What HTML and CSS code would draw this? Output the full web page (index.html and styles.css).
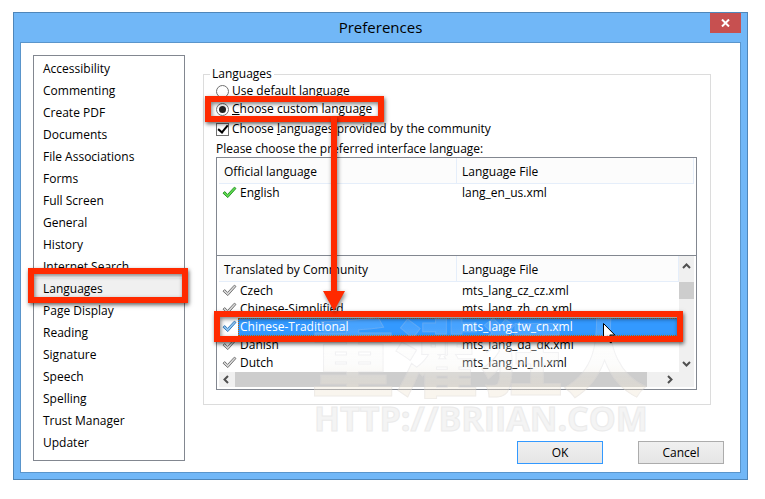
FILE: index.html
```html
<!DOCTYPE html>
<html lang="en">
<head>
    <meta charset="UTF-8">
    <meta name="viewport" content="width=device-width, initial-scale=1.0">
    <title>Preferences</title>
    <link rel="stylesheet" href="styles.css">
</head>
<body>

<!-- Check icon shared by the language rows -->
<svg width="0" height="0" class="icon-defs">
    <symbol id="check" viewBox="0 0 15 13">
        <path d="M1 7.2 L2.6 5.6 L5.6 8.4 L12.3 1.2 L14 2.4 L5.8 11.6 Z" stroke="currentColor" stroke-width="1" stroke-linejoin="round"/>
    </symbol>
</svg>

<div class="window">
    <div class="title-bar">
        <h1>Preferences</h1>
        <button class="close-button" aria-label="Close">
            <svg width="9" height="8" viewBox="0 0 9 8"><path d="M1 0.5 L8 7.5 M8 0.5 L1 7.5" stroke="#fff" stroke-width="2"/></svg>
        </button>
    </div>

    <div class="window-body">
        <ul class="sidebar">
            <li>Accessibility</li>
            <li>Commenting</li>
            <li>Create PDF</li>
            <li>Documents</li>
            <li>File Associations</li>
            <li>Forms</li>
            <li>Full Screen</li>
            <li>General</li>
            <li>History</li>
            <li>Internet Search</li>
            <li class="active">Languages<span class="mark mark-item"></span></li>
            <li>Page Display</li>
            <li>Reading</li>
            <li>Signature</li>
            <li>Speech</li>
            <li>Spelling</li>
            <li>Trust Manager</li>
            <li>Updater</li>
        </ul>

        <div class="panel">
            <fieldset class="group">
                <legend>Languages</legend>
                <label class="choice"><input type="radio" name="lang"><span>Use default language</span></label>
                <label class="choice"><input type="radio" name="lang" checked><span><u>C</u>hoose custom language</span><span class="mark mark-choice"></span></label>
                <label class="choice choice-check"><input type="checkbox" checked><span>Choose <u>l</u>anguages provided by the community</span></label>
                <p class="prompt">Please choose the preferred interface language:</p>

                <div class="list list-official">
                    <table>
                        <thead>
                            <tr><th>Official language</th><th>Language File</th></tr>
                        </thead>
                        <tbody>
                            <tr><td class="ok"><svg class="check"><use href="#check"/></svg>English</td><td>lang_en_us.xml</td></tr>
                        </tbody>
                    </table>
                </div>

                <div class="list list-community">
                    <table>
                        <thead>
                            <tr><th>Translated by Community</th><th>Language File</th></tr>
                        </thead>
                        <tbody>
                            <tr><td><svg class="check"><use href="#check"/></svg>Czech</td><td>mts_lang_cz_cz.xml</td></tr>
                            <tr><td><svg class="check"><use href="#check"/></svg>Chinese-Simplified</td><td>mts_lang_zh_cn.xml</td></tr>
                            <tr class="selected"><td><svg class="check"><use href="#check"/></svg>Chinese-Traditional<span class="mark mark-row"></span></td><td>mts_lang_tw_cn.xml</td></tr>
                            <tr><td><svg class="check"><use href="#check"/></svg>Danish</td><td>mts_lang_da_dk.xml</td></tr>
                            <tr><td><svg class="check"><use href="#check"/></svg>Dutch</td><td>mts_lang_nl_nl.xml</td></tr>
                        </tbody>
                    </table>
                    <div class="scroll-v">
                        <svg width="9" height="6" viewBox="0 0 9 6"><path d="M1 5 L4.5 1.5 L8 5" fill="none" stroke="#505050" stroke-width="2"/></svg>
                        <div class="thumb"></div>
                        <svg width="9" height="6" viewBox="0 0 9 6"><path d="M1 1 L4.5 4.5 L8 1" fill="none" stroke="#505050" stroke-width="2"/></svg>
                    </div>
                    <div class="scroll-h">
                        <svg width="6" height="9" viewBox="0 0 6 9"><path d="M5 1 L1.5 4.5 L5 8" fill="none" stroke="#505050" stroke-width="2"/></svg>
                        <div class="thumb"></div>
                        <svg width="6" height="9" viewBox="0 0 6 9"><path d="M1 1 L4.5 4.5 L1 8" fill="none" stroke="#505050" stroke-width="2"/></svg>
                    </div>
                </div>

                <svg class="arrow" width="24" height="196" viewBox="0 0 24 196"><path d="M9 0 H15 V175 H23 L12 195 L1 175 H9 Z" fill="#ff2a00"/></svg>
                <svg class="cursor" width="13" height="21" viewBox="0 0 13 21"><path d="M0.5 0.5 V16.5 L4.2 13 L7 19.5 Q8.3 20.5 9.5 18.5 L6.8 12 H11.8 Z" fill="#fff" stroke="#000"/></svg>
                <div class="watermark">
                    <div class="watermark-name">重灌狂人</div>
                    <div class="watermark-url">HTTP://BRIIAN.COM</div>
                </div>
            </fieldset>

            <div class="buttons">
                <button class="btn btn-default">OK</button>
                <button class="btn">Cancel</button>
            </div>
        </div>
    </div>
</div>

</body>
</html>
```
FILE: styles.css
```css
* {
    box-sizing: border-box;
}
body {
    margin: 12px 17px 18px 13px;
    font-family: "Open Sans", "Noto Sans", sans-serif;
    font-size: 12px;
    line-height: 18px;
    color: #000;
    background: #fff;
}
.icon-defs {
    position: absolute;
}
.window {
    background: #71b7f7;
    border: 1px solid #4f86b9;
    padding: 0 6px 6px;
    box-shadow: 0 0 5px rgba(0, 0, 0, 0.2);
}
.title-bar {
    display: flex;
    justify-content: center;
    position: relative;
    height: 29px;
}
.title-bar h1 {
    margin: 0;
    font-size: 15px;
    font-weight: normal;
    line-height: 29px;
}
.close-button {
    position: absolute;
    top: 0;
    right: 0;
    display: flex;
    align-items: center;
    justify-content: center;
    width: 31px;
    height: 20px;
    padding: 0;
    border: none;
    background: #c75050;
}
.window-body {
    display: flex;
    align-items: flex-start;
    gap: 18px;
    padding: 12px 29px 8px 12px;
    border: 1px solid #5a95cb;
    background: #fff;
}

/* Category list */
.sidebar {
    flex: none;
    width: 152px;
    margin: 0;
    padding: 2px 0 6px;
    border: 1px solid #828790;
    list-style: none;
}
.sidebar li {
    position: relative;
    height: 22px;
    padding-left: 9px;
    line-height: 22px;
}
.sidebar .active {
    background: #f0f0f0;
}

/* Languages panel */
.panel {
    flex: 1;
    min-width: 0;
    padding-top: 12px;
}
.group {
    position: relative;
    min-width: 0;
    margin: 0;
    padding: 1px 13px 14px 12px;
    border: 1px solid #dcdcdc;
}
.group legend {
    margin-left: -6px;
    padding: 0 2px;
    line-height: 14px;
}
.choice {
    position: relative;
    display: flex;
    align-items: center;
    width: max-content;
    height: 18px;
    gap: 3px;
}
.choice-check {
    margin-top: 2px;
}
.choice input {
    appearance: none;
    display: flex;
    align-items: center;
    justify-content: center;
    width: 13px;
    height: 13px;
    margin: 0;
    border: 1px solid #707070;
    background: #fff;
}
.choice input[type="radio"] {
    border-radius: 50%;
}
.choice input[type="radio"]:checked::before {
    content: "";
    width: 7px;
    height: 7px;
    border-radius: 50%;
    background: #222;
}
.choice input[type="checkbox"]:checked::before {
    content: "";
    width: 4px;
    height: 8px;
    margin-bottom: 2px;
    border: solid #000;
    border-width: 0 2px 2px 0;
    transform: rotate(40deg);
}
.prompt {
    margin: 3px 0 0;
    line-height: 16px;
}

/* Language tables */
.list {
    border: 1px solid #828790;
    padding: 0 2px;
}
.list-official {
    min-height: 99px;
}
.list-community {
    display: grid;
    grid-template-columns: 1fr 15px;
    margin-top: -1px;
    padding-bottom: 2px;
}
.list table {
    width: 100%;
    table-layout: fixed;
    border-collapse: separate;
    border-spacing: 0;
}
.list th {
    height: 26px;
    padding: 3px 5px 0;
    border-right: 1px solid #e5eefa;
    border-bottom: 1px solid #e5eefa;
    background: #fcfcfc;
    font-weight: normal;
    text-align: left;
}
.list th:first-child {
    width: 238px;
}
.list td {
    height: 18px;
    padding: 0 5px;
    white-space: nowrap;
}
.list td:first-child {
    padding-left: 3px;
    color: #000;
}
.check {
    width: 15px;
    height: 13px;
    margin-right: 3px;
    vertical-align: -2px;
    color: #777;
    fill: #d8d8d8;
}
.ok .check {
    color: #2a9a2a;
    fill: #5fd84f;
}
.selected .check {
    color: #3c7fbd;
    fill: #8fc4f0;
}
.list .selected {
    position: relative;
    background: linear-gradient(to right, #fff 19px, #3399ff 19px);
}
.list .selected td {
    color: #fff;
}
.selected td:last-child::after {
    content: "";
    position: absolute;
    inset: 0 1px 0 19px;
    border: 1px dotted #cc6600;
}

/* Scroll bars */
.scroll-v {
    display: flex;
    flex-direction: column;
    align-items: center;
    padding: 7px 0 5px;
    background: #f0f0f0;
}
.scroll-v .thumb {
    width: 15px;
    height: 17px;
    margin: 13px 0 auto;
    background: #cdcdcd;
}
.scroll-h {
    grid-column: 1 / 3;
    display: flex;
    align-items: center;
    height: 15px;
    padding: 0 21px 0 4px;
    background: #f0f0f0;
}
.scroll-h .thumb {
    flex: 1;
    height: 15px;
    margin: 0 20px 0 6px;
    background: #cdcdcd;
}

/* Annotations drawn over the dialog */
.mark {
    position: absolute;
    z-index: 3;
    border: 6px solid #ff2a00;
    box-shadow: 1px 2px 4px rgba(0, 0, 0, 0.6), inset 1px 2px 4px rgba(0, 0, 0, 0.5);
    pointer-events: none;
}
.mark-item {
    inset: -10px -4px -3px -6px;
}
.mark-choice {
    inset: -4px -12px -4px -11px;
}
.mark-row {
    inset: -7px -4px -6px -5px;
}
.arrow {
    position: absolute;
    top: 35px;
    left: 118px;
    z-index: 4;
    filter: drop-shadow(1px 2px 2px rgba(0, 0, 0, 0.5));
}
.cursor {
    position: absolute;
    top: 242px;
    left: 399px;
    z-index: 2;
}
.watermark {
    position: absolute;
    top: 227px;
    left: 107px;
    z-index: 1;
    white-space: nowrap;
    pointer-events: none;
}
.watermark-name {
    font-family: "Noto Sans CJK TC", sans-serif;
    font-size: 84px;
    font-weight: 900;
    line-height: 92px;
    color: transparent;
    background: linear-gradient(rgba(255, 255, 255, 0.1) 20%, rgba(245, 245, 243, 0.3) 60%, rgba(240, 230, 212, 0.4) 90%);
    background-clip: text;
    -webkit-text-stroke: 1px rgba(200, 200, 210, 0.2);
}
.watermark-url {
    margin-left: 3px;
    font-size: 34px;
    font-weight: bold;
    line-height: 36px;
    color: #f4f4f4;
    -webkit-text-stroke: 1px #ebebeb;
}

/* Dialog buttons */
.buttons {
    display: flex;
    justify-content: flex-end;
    gap: 35px;
    margin: 36px -13px 0 0;
}
.btn {
    width: 86px;
    height: 23px;
    padding: 0;
    border: 1px solid #acacac;
    background: linear-gradient(#f0f0f0, #e5e5e5);
    font: inherit;
}
.btn-default {
    border-color: #3399ff;
}
```
